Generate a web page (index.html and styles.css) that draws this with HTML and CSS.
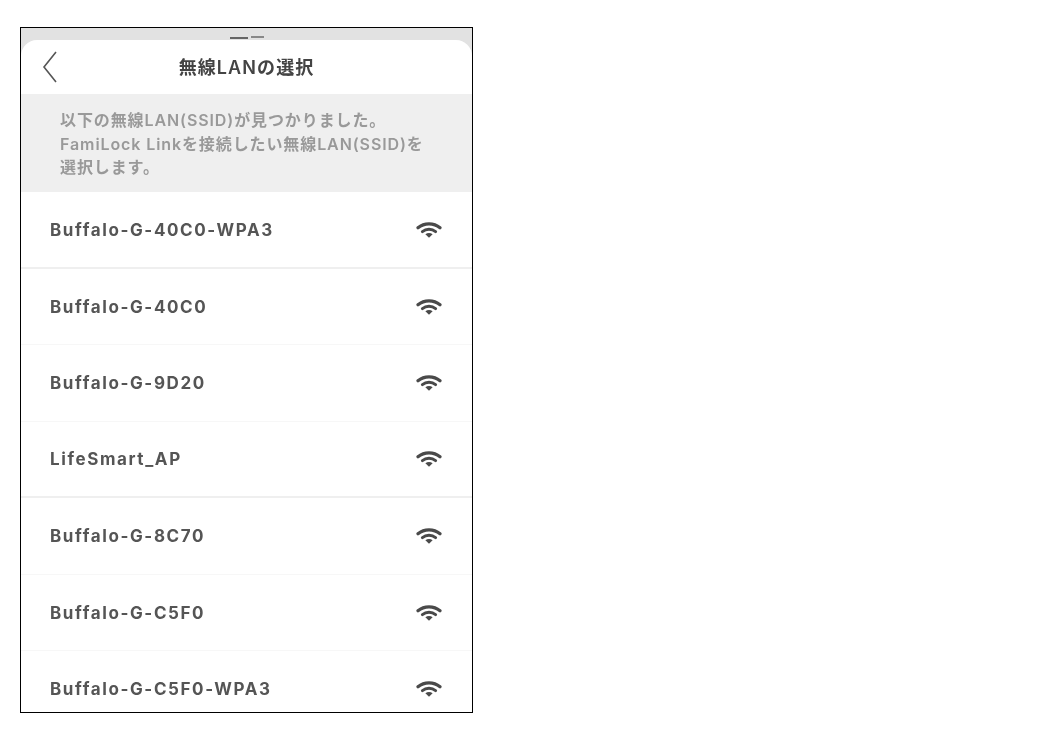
FILE: index.html
```html
<!DOCTYPE html>
<html lang="ja">

<head>
    <meta charset="UTF-8">
    <title>無線LANの選択</title>
    <link rel="stylesheet" href="styles.css">
</head>

<body>
    <svg class="icon-defs" width="0" height="0">
        <symbol id="wifi" viewBox="0 0 26 16">
            <path d="M2 5.800C8.200 .6 17.800 .6 24 5.800" fill="none" stroke="currentColor" stroke-width="3.200" stroke-linecap="round"/>
            <path d="M6.400 9.600c3.800-3 9.400-3 13.200 0" fill="none" stroke="currentColor" stroke-width="3" stroke-linecap="round"/>
            <path d="M9.400 12.200c2.200-1.500 5-1.500 7.200 0L13 15.800z" fill="currentColor"/>
        </symbol>
    </svg>

    <div class="phone">
        <div class="status-strip"><span class="status-mark"></span><span class="status-dots"></span></div>
        <div class="sheet">
            <header class="nav">
                <svg class="back" width="16" height="34" viewBox="0 0 16 34">
                    <path d="M14 2 2 17l12 15" fill="none" stroke="currentColor" stroke-width="1.600"/>
                </svg>
                <h1 class="nav-title">無線LANの選択</h1>
            </header>
            <p class="notice">以下の無線LAN(SSID)が見つかりました。<br>FamiLock Linkを接続したい無線LAN(SSID)を<br>選択します。</p>
            <ul class="network-list">
                <li class="network strong-line"><span>Buffalo-G-40C0-WPA3</span><svg class="wifi"><use href="#wifi"/></svg></li>
                <li class="network"><span>Buffalo-G-40C0</span><svg class="wifi"><use href="#wifi"/></svg></li>
                <li class="network"><span>Buffalo-G-9D20</span><svg class="wifi"><use href="#wifi"/></svg></li>
                <li class="network strong-line"><span>LifeSmart_AP</span><svg class="wifi"><use href="#wifi"/></svg></li>
                <li class="network"><span>Buffalo-G-8C70</span><svg class="wifi"><use href="#wifi"/></svg></li>
                <li class="network"><span>Buffalo-G-C5F0</span><svg class="wifi"><use href="#wifi"/></svg></li>
                <li class="network"><span>Buffalo-G-C5F0-WPA3</span><svg class="wifi"><use href="#wifi"/></svg></li>
            </ul>
        </div>
    </div>
</body>

</html>
```

FILE: styles.css
```css
body {
    margin: 0;
    background-color: #fff;
    font-family: 'Inter', 'Noto Sans CJK JP', sans-serif;
}

.icon-defs {
    display: block;
}

.phone {
    box-sizing: border-box;
    width: 453px;
    height: 686px;
    margin: 27px 0 0 20px;
    border: 1px solid #000;
    background-color: #e2e2e2;
    overflow: hidden;
}

.status-strip {
    height: 12px;
    display: flex;
    justify-content: center;
    gap: 3px;
    filter: blur(0.5px);
}

.status-mark {
    width: 18px;
    height: 2px;
    margin-top: 9px;
    background-color: #666;
}

.status-dots {
    width: 13px;
    height: 2px;
    margin-top: 8px;
    background-color: #888;
}

.sheet {
    height: 100%;
    background-color: #fff;
    border-radius: 16px 16px 0 0;
}

.nav {
    height: 54px;
    display: flex;
    align-items: center;
    justify-content: center;
    position: relative;
}

.back {
    position: absolute;
    left: 21px;
    top: 10px;
    color: #555;
    filter: blur(0.5px);
}

.nav-title {
    margin: -2px 0 0 0;
    font-size: 18px;
    font-weight: 600;
    color: #444;
    letter-spacing: 1.1px;
    filter: blur(0.6px);
}

.notice {
    box-sizing: border-box;
    height: 98px;
    margin: 0;
    padding: 15px 20px 0 39px;
    background-color: #efefef;
    color: #999;
    font-size: 16px;
    font-weight: 600;
    line-height: 23.5px;
    letter-spacing: 0.9px;
    white-space: nowrap;
    filter: blur(0.6px);
}

.network-list {
    list-style: none;
    margin: 0;
    padding: 0;
}

.network {
    box-sizing: border-box;
    height: 76.5px;
    display: flex;
    align-items: center;
    justify-content: space-between;
    padding: 1px 30px 0 29px;
    border-bottom: 1px solid #f7f7f7;
    color: #555;
    font-size: 17px;
    font-weight: 700;
    letter-spacing: 1.6px;
}

.network span {
    filter: blur(0.6px);
}

.strong-line {
    border-bottom: 2px solid #efefef;
}

.wifi {
    width: 26px;
    height: 16px;
    color: #4a4a4a;
    filter: blur(0.6px);
}
```
